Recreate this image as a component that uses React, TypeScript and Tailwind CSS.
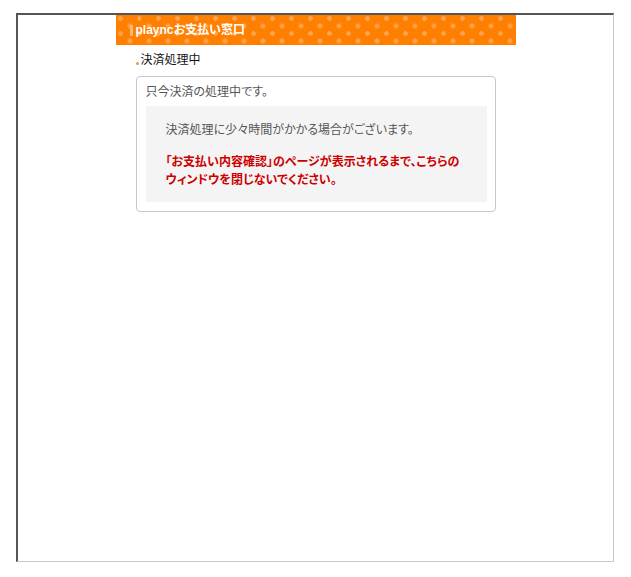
import React from "react";

export default function App() {
  const font =
    "[font-family:'Liberation_Sans','Noto_Sans_CJK_JP',sans-serif]";
  return (
    <div className={`w-[631px] h-[577px] bg-white pt-[13px] pl-[16px] ${font} [font-feature-settings:'palt']`}>
      <div className="w-[598px] h-[549px] border-t-2 border-l-2 border-[#555555] border-r border-b border-r-[#c8c8c8] border-b-[#c8c8c8] bg-white">
        <div className="w-[400px] mx-auto">
          <div className="h-[30px] flex items-center pl-[14px] bg-[#ff8000] [background-image:radial-gradient(circle,#ffa24a_2px,transparent_2.8px),radial-gradient(circle,#ffa24a_2px,transparent_2.8px)] [background-size:19px_15px] [background-position:-5px_-4px,4.5px_3.5px]">
            <span className="w-[3px] h-[11px] bg-[#ffbb7a] mr-[3px]" />
            <span className="text-white font-bold text-[12px] leading-[18px]">playncお支払い窓口</span>
          </div>
          <div className="px-[20px]">
            <div className="mt-[6px] flex items-end h-[18px]">
              <span className="w-[3px] h-[3px] rounded-full bg-[#e59a3c] mb-[4px] mr-[2px]" />
              <span className="text-[12px] leading-[18px] text-[#111111]">決済処理中</span>
            </div>
            <div className="mt-[7px] w-[360px] border border-[#c8c8c8] rounded-[4px] pt-[6px] pb-[9px] pl-[9px] pr-[8px]">
              <p className="text-[12px] leading-[18px] text-[#555555]">只今決済の処理中です。</p>
              <div className="mt-[5px] bg-[#f4f4f4] pt-[15px] pb-[13px] pl-[20px] pr-[10px]">
                <p className="text-[12px] leading-[18px] text-[#555555]">決済処理に少々時間がかかる場合がございます。</p>
                <p className="mt-[14px] text-[12px] leading-[18px] font-bold text-[#cc0000]">
                  「お支払い内容確認」のページが表示されるまで、こちらの
                  <br />
                  ウィンドウを閉じないでください。
                </p>
              </div>
            </div>
          </div>
        </div>
      </div>
    </div>
  );
}
